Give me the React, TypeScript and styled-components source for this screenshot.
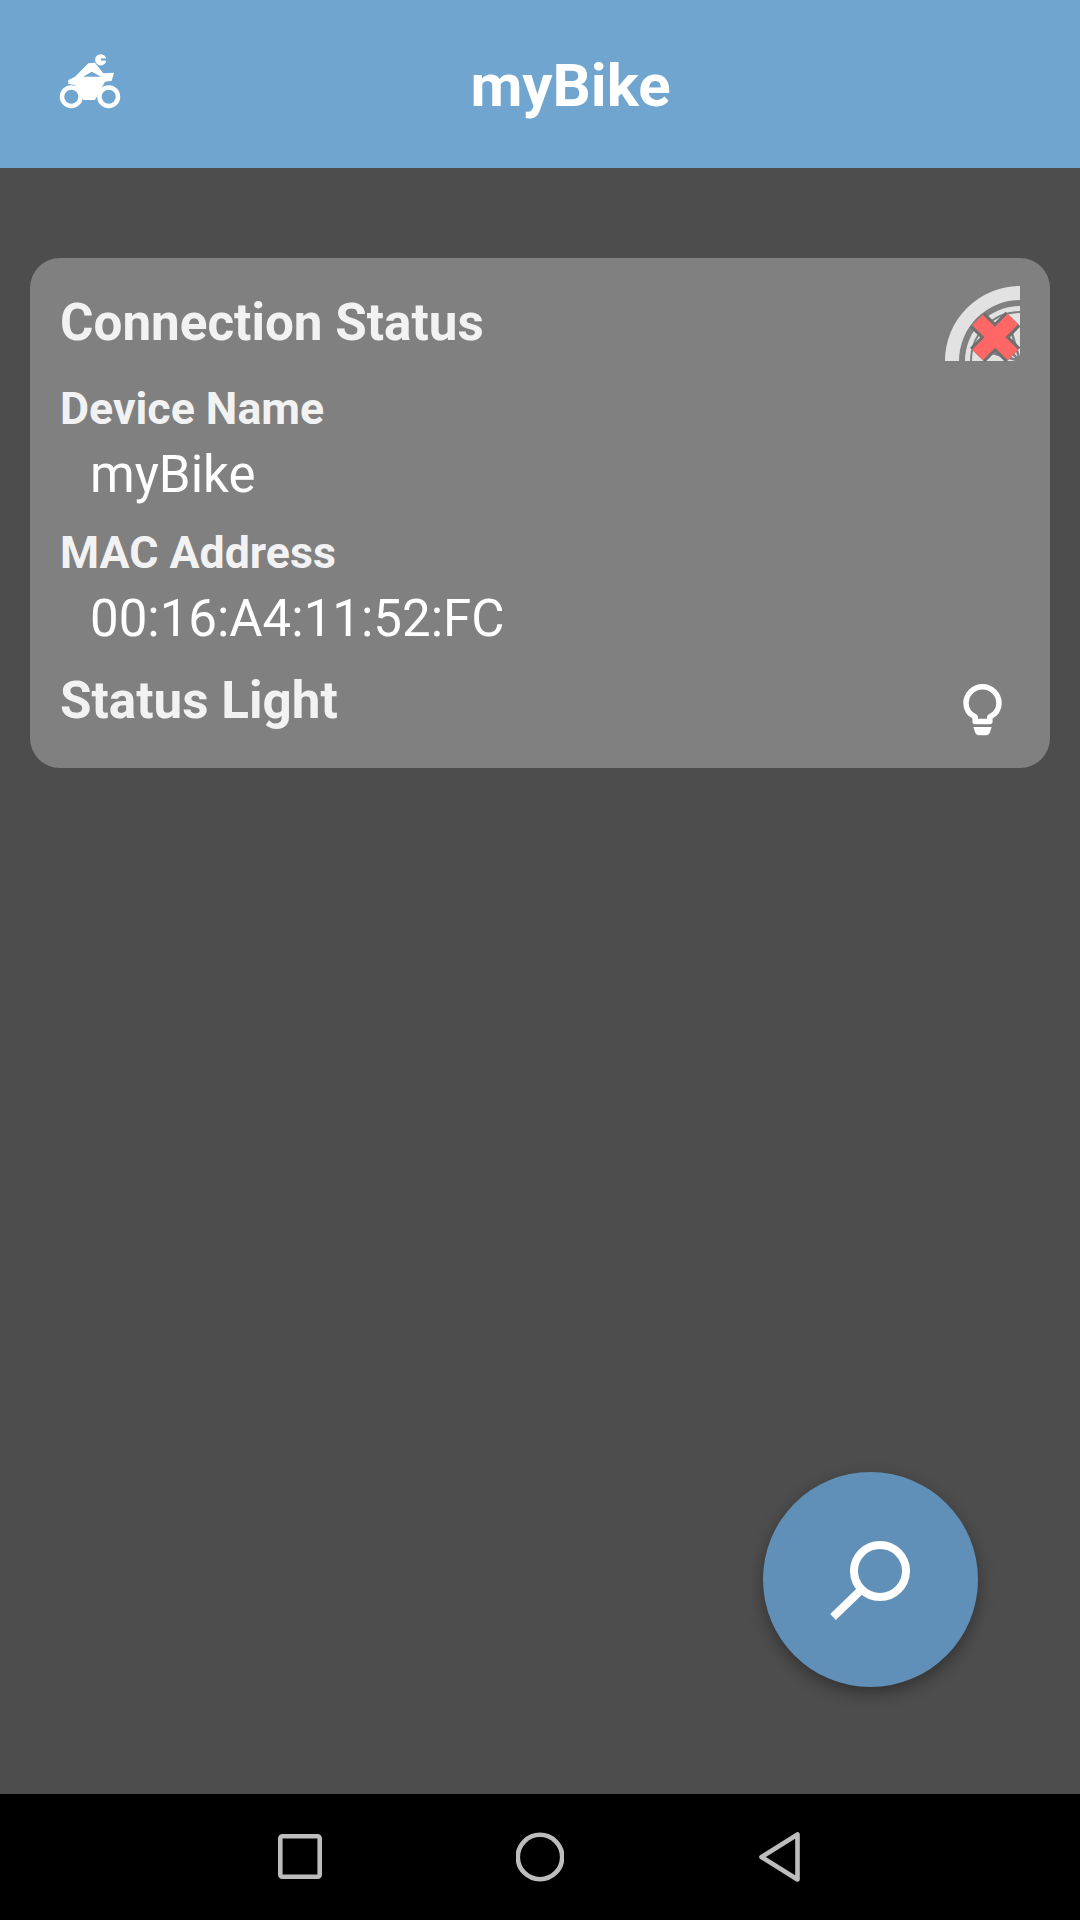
import React from 'react';
import styled, { createGlobalStyle } from 'styled-components';

const GlobalStyle = createGlobalStyle`
  html, body {
    margin: 0;
    padding: 0;
    background: #4d4d4d;
  }
  * {
    box-sizing: border-box;
  }
`;

const Page = styled.div`
  position: relative;
  width: 1080px;
  height: 1920px;
  display: flex;
  flex-direction: column;
  background: #4d4d4d;
  font-family: Roboto, "Liberation Sans", sans-serif;
  overflow: hidden;
`;

const Header = styled.header`
  height: 168px;
  flex: none;
  display: flex;
  align-items: center;
  padding: 0 60px 0 59px;
  background: #6fa5cf;
`;

const HeaderIcon = styled.svg`
  width: 62px;
  height: 62px;
  flex: none;
  margin-top: -4px;
`;

const Title = styled.h1`
  flex: 1;
  margin: 4px 0 0;
  text-align: center;
  font-size: 60px;
  font-weight: 700;
  line-height: 1;
  color: #fff;
`;

const Main = styled.main`
  flex: 1;
  padding: 90px 30px 0;
`;

const Card = styled.section`
  height: 510px;
  padding: 28px 30px 0;
  background: #808080;
  border-radius: 30px;
  display: flex;
  flex-direction: column;
`;

const Row = styled.div`
  display: flex;
  justify-content: space-between;
  align-items: flex-start;
`;

const SectionTitle = styled.h2<{ $top: number }>`
  margin: ${props => props.$top}px 0 0;
  font-size: 51.2px;
  line-height: 60px;
  font-weight: 700;
  color: #f2f2f2;
`;

const Label = styled.div<{ $top: number }>`
  margin-top: ${props => props.$top}px;
  font-size: 44.7px;
  line-height: 54px;
  font-weight: 700;
  color: #f2f2f2;
`;

const Value = styled.div`
  margin-top: 9px;
  padding-left: 30px;
  font-size: 51px;
  line-height: 60px;
  font-weight: 400;
  color: #fff;
`;

const GaugeIcon = styled.svg`
  width: 75px;
  height: 76px;
  flex: none;
`;

const BulbIcon = styled.svg`
  width: 55px;
  height: 55px;
  flex: none;
  margin: 35px 10px 0 0;
`;

const Fab = styled.button`
  position: absolute;
  left: 763px;
  top: 1472px;
  width: 215px;
  height: 215px;
  padding: 0;
  border: none;
  border-radius: 50%;
  display: flex;
  align-items: center;
  justify-content: center;
  background: #6090b8;
  box-shadow: 0 6px 16px rgba(0, 0, 0, 0.35);
`;

const SearchIcon = styled.svg`
  width: 90px;
  height: 90px;
  margin-left: 2px;
`;

const NavBar = styled.nav`
  height: 126px;
  flex: none;
  display: flex;
  align-items: center;
  justify-content: center;
  gap: 192px;
  background: #000;
`;

const NavIcon = styled.svg`
  width: 48px;
  height: 52px;
  flex: none;
  fill: none;
  stroke: #bdbdbd;
  stroke-width: 4.6;
  stroke-linejoin: round;
`;

const Bike = () => (
  <HeaderIcon viewBox="0 0 62 62">
    <g fill="#fff">
      <circle cx="41.7" cy="8.8" r="5.6" />
      <path
        d="M9.3 29L16 25.7 29.3 12.3 36 11.7 44.3 22.3 55 21.7 52.7 29.7 46 30.7 36 49H24.3L16 34 9.3 33zM24.3 25.7H42L32.7 20.7z"
        fillRule="evenodd"
      />
    </g>
    <rect x="42" y="7.4" width="6" height="2.2" fill="#6fa5cf" />
    <g fill="none" stroke="#fff" strokeWidth="4.5">
      <circle cx="12.3" cy="45.7" r="9.3" />
      <circle cx="49.7" cy="45.7" r="9.3" />
    </g>
  </HeaderIcon>
);

const Gauge = () => (
  <GaugeIcon viewBox="0 0 75 76">
    <path d="M75 0v14A61 61 0 0 0 14 75H0A75 75 0 0 1 75 0z" fill="#e2e2e2" />
    <path d="M75 20v55H20A55 55 0 0 1 75 20z" fill="#e2e2e2" />
    <path d="M75 26A49 49 0 0 0 26 75" fill="none" stroke="#808080" strokeWidth="2" />
    <path d="M75 75L30 62M75 75L42 42M75 75L62 30" fill="none" stroke="#808080" strokeWidth="2.5" />
    <path d="M32.5 34L68 69M68 33L32.5 69" fill="none" stroke="#6f6f6f" strokeWidth="21" />
    <path d="M32.5 34L68 69M68 33L32.5 69" fill="none" stroke="#ff6666" strokeWidth="15" />
  </GaugeIcon>
);

const Bulb = () => (
  <BulbIcon viewBox="0 0 60 60" fill="none">
    <path
      d="M22 41v-5c-6-3-10-8-10-15a18 18 0 0 1 36 0c0 7-4 12-10 15v5z"
      stroke="#fff"
      strokeWidth="6"
      strokeLinejoin="round"
    />
    <path d="M20 47h20l-2 6c-1 2-2 3-4 3h-8c-2 0-3-1-4-3z" fill="#fff" />
  </BulbIcon>
);

const App: React.FC = () => (
  <Page>
    <GlobalStyle />
    <Header>
      <Bike />
      <Title>myBike</Title>
    </Header>
    <Main>
      <Card>
        <Row>
          <SectionTitle $top={7}>Connection Status</SectionTitle>
          <Gauge />
        </Row>
        <Label $top={20}>Device Name</Label>
        <Value>myBike</Value>
        <Label $top={21}>MAC Address</Label>
        <Value>00:16:A4:11:52:FC</Value>
        <Row>
          <SectionTitle $top={22}>Status Light</SectionTitle>
          <Bulb />
        </Row>
      </Card>
    </Main>
    <Fab aria-label="Search">
      <SearchIcon viewBox="0 0 90 90" fill="none" stroke="#fff" strokeWidth="8">
        <circle cx="53" cy="36" r="26" />
        <path d="M34 55L6 82" />
      </SearchIcon>
    </Fab>
    <NavBar>
      <NavIcon viewBox="0 0 48 52">
        <rect x="4.3" y="5.3" width="39.4" height="40.4" rx="2" />
      </NavIcon>
      <NavIcon viewBox="0 0 48 52">
        <circle cx="24" cy="26" r="22.2" />
      </NavIcon>
      <NavIcon viewBox="0 0 48 52">
        <path d="M41.5 3.5V48.5L5.5 26z" />
      </NavIcon>
    </NavBar>
  </Page>
);

export default App;
